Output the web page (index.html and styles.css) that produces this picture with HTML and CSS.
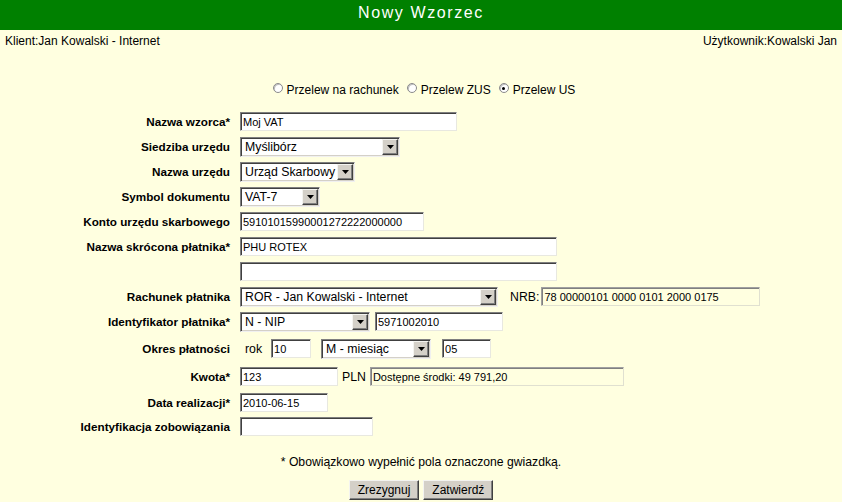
FILE: index.html
```html
<!DOCTYPE html>
<html lang="pl">
<head>
<meta charset="utf-8">
<title>Nowy Wzorzec</title>
<link rel="stylesheet" href="styles.css">
</head>
<body>
<header class="title">Nowy Wzorzec</header>
<div class="userbar">
  <span>Klient:Jan Kowalski - Internet</span>
  <span>Użytkownik:Kowalski Jan</span>
</div>
<div class="types">
  <label class="opt"><input type="radio" name="typ"> Przelew na rachunek</label>
  <label class="opt"><input type="radio" name="typ"> Przelew ZUS</label>
  <label class="opt"><input type="radio" name="typ" checked> Przelew US</label>
</div>
<form class="form">
  <div class="row">
    <div class="lbl">Nazwa wzorca*</div>
    <div class="ctl"><input class="in w217" value="Moj VAT"></div>
  </div>
  <div class="row">
    <div class="lbl">Siedziba urzędu</div>
    <div class="ctl"><div class="select w160"><span class="val">Myślibórz</span><span class="arrow"><svg width="7" height="4" viewBox="0 0 7 4"><path d="M0 0H7L3.5 4Z" fill="#000"/></svg></span></div></div>
  </div>
  <div class="row">
    <div class="lbl">Nazwa urzędu</div>
    <div class="ctl"><div class="select w115"><span class="val">Urząd Skarbowy</span><span class="arrow"><svg width="7" height="4" viewBox="0 0 7 4"><path d="M0 0H7L3.5 4Z" fill="#000"/></svg></span></div></div>
  </div>
  <div class="row">
    <div class="lbl">Symbol dokumentu</div>
    <div class="ctl"><div class="select w80"><span class="val">VAT-7</span><span class="arrow"><svg width="7" height="4" viewBox="0 0 7 4"><path d="M0 0H7L3.5 4Z" fill="#000"/></svg></span></div></div>
  </div>
  <div class="row">
    <div class="lbl">Konto urzędu skarbowego</div>
    <div class="ctl"><input class="in w184" value="59101015990001272222000000"></div>
  </div>
  <div class="row">
    <div class="lbl">Nazwa skrócona płatnika*</div>
    <div class="ctl"><input class="in w317" value="PHU ROTEX"></div>
  </div>
  <div class="row">
    <div class="lbl"></div>
    <div class="ctl"><input class="in w317" value=""></div>
  </div>
  <div class="row">
    <div class="lbl">Rachunek płatnika</div>
    <div class="ctl">
      <div class="select w258"><span class="val">ROR - Jan Kowalski - Internet</span><span class="arrow"><svg width="7" height="4" viewBox="0 0 7 4"><path d="M0 0H7L3.5 4Z" fill="#000"/></svg></span></div>
      <span class="txt nrb">NRB:</span>
      <input class="in ro w219" value="78 00000101 0000 0101 2000 0175" readonly>
    </div>
  </div>
  <div class="row">
    <div class="lbl">Identyfikator płatnika*</div>
    <div class="ctl">
      <div class="select w130"><span class="val">N - NIP</span><span class="arrow"><svg width="7" height="4" viewBox="0 0 7 4"><path d="M0 0H7L3.5 4Z" fill="#000"/></svg></span></div>
      <input class="in w128" value="5971002010">
    </div>
  </div>
  <div class="row r29">
    <div class="lbl">Okres płatności</div>
    <div class="ctl okres">
      <span class="txt rok">rok</span>
      <input class="in w40" value="10">
      <div class="select w110"><span class="val">M - miesiąc</span><span class="arrow"><svg width="7" height="4" viewBox="0 0 7 4"><path d="M0 0H7L3.5 4Z" fill="#000"/></svg></span></div>
      <input class="in w49 last" value="05">
    </div>
  </div>
  <div class="row r27">
    <div class="lbl">Kwota*</div>
    <div class="ctl kwota">
      <input class="in w98" value="123">
      <span class="txt">PLN</span>
      <input class="in ro w254" value="Dostępne środki: 49 791,20" readonly>
    </div>
  </div>
  <div class="row">
    <div class="lbl">Data realizacji*</div>
    <div class="ctl"><input class="in w88" value="2010-06-15"></div>
  </div>
  <div class="row r23">
    <div class="lbl">Identyfikacja zobowiązania</div>
    <div class="ctl"><input class="in w133" value=""></div>
  </div>
</form>
<p class="note">* Obowiązkowo wypełnić pola oznaczone gwiazdką.</p>
<div class="buttons">
  <button type="button" class="btn">Zrezygnuj</button>
  <button type="button" class="btn">Zatwierdź</button>
</div>
</body>
</html>
```
FILE: styles.css
```css
html, body {
  margin: 0;
  padding: 0;
}
body {
  background: #ffffe0;
  font-family: "Liberation Sans", Arial, sans-serif;
  color: #000;
  width: 842px;
  height: 502px;
  overflow: hidden;
}
.title {
  background: #008000;
  color: #fff;
  height: 30px;
  line-height: 26px;
  text-align: center;
  font-size: 16px;
  letter-spacing: 1.6px;
}
.userbar {
  display: flex;
  justify-content: space-between;
  padding: 0 5px;
  height: 20px;
  line-height: 22px;
  font-size: 12px;
}
.types {
  margin-top: 30px;
  height: 20px;
  display: flex;
  justify-content: center;
  align-items: center;
  gap: 8px;
  font-size: 12px;
  padding-left: 6px;
}
.opt {
  display: inline-flex;
  align-items: center;
  gap: 4px;
}
.opt input {
  appearance: none;
  -webkit-appearance: none;
  margin: 0 0 4px 0;
  width: 10px;
  height: 10px;
  border-radius: 50%;
  border: 1px solid #8a8a8a;
  background: #fff;
  box-shadow: inset 1px 1px 0 #c0c0c0;
  position: relative;
}
.opt input:checked::after {
  content: "";
  position: absolute;
  left: 2.5px;
  top: 2.5px;
  width: 3px;
  height: 3px;
  border-radius: 50%;
  background: #000;
}
.form {
  margin-top: 9px;
}
.row {
  display: flex;
  align-items: center;
  height: 25px;
}
.row.r29 { height: 29px; }
.row.r27 { height: 27px; }
.row.r23 { height: 23px; }
.lbl {
  width: 230px;
  margin-right: 10px;
  text-align: right;
  font-size: 11.7px;
  font-weight: bold;
  white-space: nowrap;
}
.ctl {
  display: flex;
  align-items: center;
  gap: 5px;
}
.in {
  box-sizing: border-box;
  height: 19px;
  margin: 0;
  padding: 0 2px;
  border: 1px solid;
  border-color: #7f7f7f #e8e8e0 #e8e8e0 #7f7f7f;
  box-shadow: inset 1px 1px 0 #404040;
  background: #fff;
  font-family: "Liberation Sans", Arial, sans-serif;
  font-size: 11px;
  color: #000;
  outline: none;
}
.in.ro {
  background: #ffffe0;
  border-color: #a0a0a0 #e0e0d0 #e0e0d0 #a0a0a0;
  box-shadow: inset 1px 1px 0 #808080;
}
.select {
  box-sizing: border-box;
  height: 20px;
  display: inline-flex;
  align-items: stretch;
  border: 1px solid;
  border-color: #7f7f7f #f0f0f0 #f0f0f0 #7f7f7f;
  box-shadow: inset 1px 1px 0 #404040, inset -1px -1px 0 #d4d0c8;
  background: #fff;
  padding: 1px;
}
.select .val {
  flex: 1;
  font-size: 12.3px;
  line-height: 16px;
  padding-left: 3px;
  white-space: nowrap;
  overflow: hidden;
}
.select .arrow {
  box-sizing: border-box;
  width: 16px;
  flex: none;
  background: #d4d0c8;
  border: 1px solid;
  border-color: #f4f4f0 #404040 #404040 #f4f4f0;
  box-shadow: inset -1px -1px 0 #808080;
  display: flex;
  align-items: center;
  justify-content: center;
}
.txt {
  font-size: 12.3px;
}
.nrb { margin-left: 7px; margin-right: -3px; }
.okres { gap: 10px; }
.okres .rok { margin-left: 5px; margin-right: -1px; }
.okres .last { margin-left: 1px; }
.kwota { gap: 4px; }
.w40 { width: 40px; }
.w49 { width: 49px; }
.w80 { width: 80px; }
.w88 { width: 88px; }
.w98 { width: 98px; }
.w110 { width: 110px; }
.w115 { width: 115px; }
.w128 { width: 128px; }
.w130 { width: 130px; }
.w133 { width: 133px; }
.w160 { width: 160px; }
.w184 { width: 184px; }
.w217 { width: 217px; }
.w219 { width: 219px; }
.w254 { width: 254px; }
.w258 { width: 258px; }
.w317 { width: 317px; }
.note {
  margin: 14px 0 0 0;
  height: 20px;
  line-height: 20px;
  text-align: center;
  font-size: 12.2px;
}
.buttons {
  margin-top: 8px;
  display: flex;
  justify-content: center;
  gap: 4px;
}
.btn {
  box-sizing: border-box;
  height: 20px;
  padding: 0 8px;
  background: #d4d0c8;
  border: 1px solid;
  border-color: #f4f4f0 #404040 #404040 #f4f4f0;
  box-shadow: inset -1px -1px 0 #808080;
  font-family: "Liberation Sans", Arial, sans-serif;
  font-size: 12px;
  color: #000;
}
```
